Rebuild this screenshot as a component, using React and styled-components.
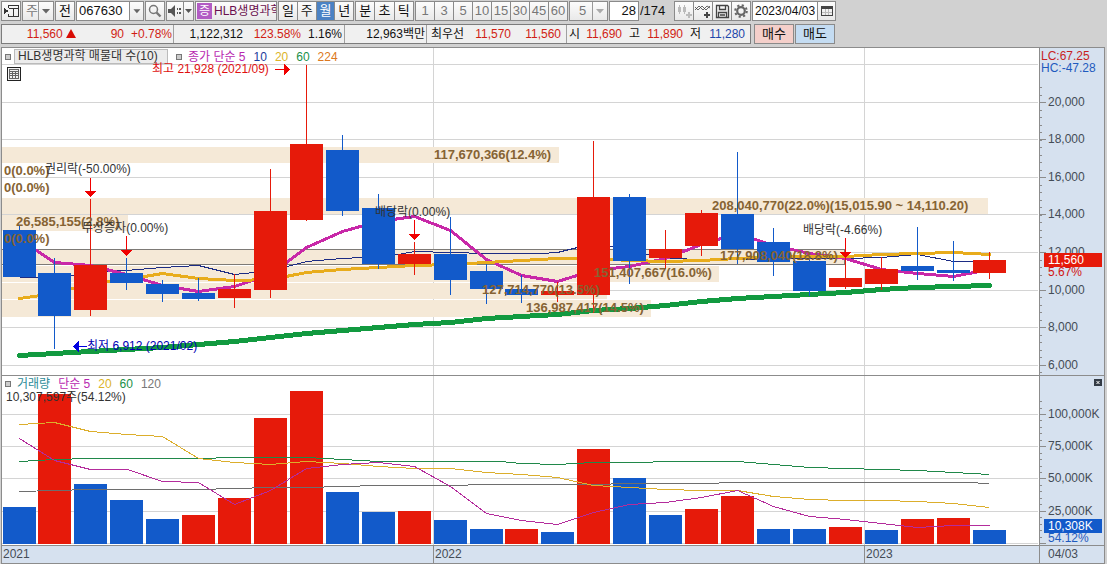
import { useState } from 'react';
import styled, { createGlobalStyle, css } from 'styled-components';

const RED = '#e61a0a';
const BLUE = '#125aca';
const MAGENTA = '#c828a8';
const GOLD = '#e8ac1c';
const GREEN = '#129a40';
const NAVY = '#1c2c84';

// Canvas units of the two plots
const PRICE_BOX = { left: 2, top: 48, width: 1037, height: 327 };
const VOLUME_BOX = { left: 2, top: 376, width: 1037, height: 169 };
const VOLUME_BASE = 544;
const BAR_WIDTH = 33;

// x, body top, body bottom, wick top, wick bottom, volume top, up?, volume up?
const months = [
    [3, 230, 277, 225, 277, 507, false, false],
    [38, 273, 316, 258, 349, 394, false, true],
    [74, 265, 310, 199, 316, 484, true, false],
    [110, 273, 283, 258, 290, 500, false, false],
    [146, 284, 294, 280, 302, 519, false, false],
    [182, 293, 299, 278, 301, 515, false, true],
    [218, 289, 298, 274, 308, 498, true, true],
    [254, 211, 290, 169, 298, 418, true, true],
    [290, 144, 220, 65, 221, 391, true, true],
    [326, 150, 211, 135, 216, 492, false, false],
    [362, 208, 264, 194, 269, 512, false, false],
    [398, 254, 264, 242, 275, 511, true, true],
    [434, 254, 280, 217, 295, 520, false, false],
    [470, 271, 289, 264, 304, 529, false, false],
    [505, 289, 295, 275, 303, 529, false, true],
    [541, 291, 295, 282, 302, 532, true, false],
    [577, 197, 295, 141, 313, 449, true, true],
    [613, 197, 261, 194, 284, 478, false, false],
    [649, 249, 258, 230, 269, 515, true, false],
    [685, 213, 246, 210, 256, 509, true, true],
    [721, 214, 249, 152, 264, 496, false, true],
    [757, 242, 262, 228, 276, 529, false, false],
    [793, 261, 291, 258, 296, 529, false, false],
    [829, 278, 287, 238, 289, 527, true, true],
    [865, 269, 284, 257, 290, 530, true, false],
    [901, 266, 271, 227, 280, 519, false, true],
    [937, 270, 273, 241, 281, 518, false, true],
    [973, 260, 273, 252, 279, 530, true, false],
];

// Volume profile bands
const bands = [
    { top: 147, height: 16, right: 559, text: '117,670,366(12.4%)', left: 434, at: 155 },
    { top: 198, height: 16, right: 988, text: '208,040,770(22.0%)(15,015.90 ~ 14,110.20)', left: 712, at: 206 },
    { top: 215, height: 16, right: 128, text: '26,585,155(2.8%)', left: 16, at: 222 },
    { top: 249, height: 16, right: 845, text: '177,908,040(18.8%)', left: 720, at: 256, outlined: true },
    { top: 266, height: 16, right: 719, text: '151,407,667(16.0%)', left: 594, at: 273 },
    { top: 283, height: 16, right: 607, text: '127,714,770(13.5%)', left: 482, at: 290 },
    { top: 300, height: 17, right: 651, text: '136,987,417(14.5%)', left: 526, at: 308 },
];

const emptyBands = [171, 188, 239];

const priceAverages = [
    {
        color: NAVY,
        width: 1,
        points: '19,277 54,277 72,275 90,272 126,270 162,267 198,265 234,274 254,272 287,266 306,261 342,258 362,257 398,254 414,251 450,252 486,253 540,253 557,252 577,247 593,246 612,246 629,248 647,254 665,258 682,258 701,260 737,259 773,258 809,258 845,258 881,257 917,254 953,261 989,261',
    },
    {
        color: MAGENTA,
        width: 3,
        points: '19,238 36,250 54,262 90,265 126,274 162,285 198,291 234,286 270,274 306,247 342,231 378,221 414,216 450,230 486,259 521,275 557,281 593,270 629,266 665,258 701,244 737,233 773,245 809,253 845,258 881,269 917,273 953,276 989,269',
    },
    {
        color: GOLD,
        width: 3,
        points: '19,298 54,293 72,288 107,281 126,279 162,273 198,278 234,280 270,279 306,272 342,269 378,267 414,265 450,264 486,262 521,260 557,258 593,258 629,260 665,261 701,260 737,258 773,256 809,256 845,256 881,254 917,253 953,252 989,254',
    },
    {
        color: GREEN,
        width: 5,
        points: '19,355 54,353 90,351 126,349 162,347 198,344 234,341 270,337 306,333 342,330 378,327 414,324 450,322 486,318 521,316 557,314 593,310 629,308 665,305 701,301 737,298 773,296 809,294 845,292 881,289 917,287 953,286 989,285',
    },
];

const volumeAverages = [
    { color: '#6e6e6e', points: '19,491 54,490 90,489 198,489 234,488 270,487 306,487 342,486 378,485 450,485 486,484 593,484 629,483 701,483 737,482 965,482 989,483' },
    { color: '#20884a', points: '19,461 54,459 90,458 198,458 234,457 306,457 342,459 378,461 414,461 500,461 521,463 557,464 593,462 640,462 665,461 737,461 773,464 809,467 845,468 881,469 917,470 953,472 989,474' },
    { color: '#dcae2c', points: '19,424 54,422 90,431 126,434 162,436 198,458 234,462 270,464 306,461 342,463 378,466 414,468 450,468 486,472 521,474 557,477 593,485 629,487 665,489 701,490 737,490 773,496 809,499 845,500 881,500 917,501 953,503 989,507' },
    { color: '#b42c9c', points: '19,438 54,460 90,469 127,469 162,481 198,482 234,504 270,490 306,468 342,464 378,462 414,466 450,486 486,513 521,520 557,524 593,512 629,504 665,502 701,497 737,490 773,506 809,516 845,519 881,523 917,527 953,525 989,525' },
];

const events = [
    { left: 45, at: 169, text: '권리락(-50.00%)', tip: [90, 178, 197] },
    { left: 82, at: 228, text: '무상증자(0.00%)', tip: [126, 236, 256] },
    { left: 375, at: 212, text: '배당락(0.00%)', tip: [414, 220, 240] },
    { left: 803, at: 230, text: '배당락(-4.66%)', tip: [845, 238, 258] },
];

const priceGrid = [64, 102, 139, 177, 214, 252, 290, 327, 365];
const priceLabels = ['20,000', '18,000', '16,000', '14,000', '12,000', '10,000', '8,000', '6,000'];
const volumeGrid = [414, 446, 478, 511, 543];
const volumeLabels = ['100,000K', '75,000K', '50,000K', '25,000K'];
const yearLines = [433, 864];

const GlobalStyle = createGlobalStyle`
    * {
        box-sizing: border-box;
    }

    body {
        margin: 0;
        background: #d1d1d1;
        font-family: 'Liberation Sans', 'Noto Sans CJK KR', sans-serif;
        font-size: 12px;
        line-height: 14px;
        color: #111;
    }

    button, input, select {
        font: inherit;
        color: inherit;
        margin: 0;
        padding: 0;
    }
`;

const Page = styled.main`
    display: flex;
    flex-direction: column;
    min-height: 100vh;
`;

const Header = styled.header`
    display: flex;
    flex-direction: column;
    gap: 3px;
    padding: 1px 1px 3px;
`;

const Bar = styled.div`
    display: flex;
    gap: 1px;
    height: 20px;
    white-space: nowrap;
`;

const raised = css`
    border: 1px solid #8a8a8a;
    background: linear-gradient(#fcfcfc, #e9e9e9);
`;

const ToolButton = styled.button`
    ${raised}
    display: flex;
    align-items: center;
    justify-content: center;
    flex: none;
    width: ${(p) => p.$width || 20}px;
    font-size: 13px;
    ${(p) => p.$tone && css`background: ${p.$tone};`}
`;

const Group = styled.div`
    ${raised}
    display: flex;
    flex: none;
    width: ${(p) => p.$width}px;
`;

const GroupButton = styled.button`
    display: flex;
    align-items: center;
    justify-content: center;
    flex: ${(p) => (p.$width ? 'none' : '1 1 0')};
    width: ${(p) => (p.$width ? `${p.$width}px` : 'auto')};
    border: 0;
    background: ${(p) => (p.$active ? '#4b82c4' : 'linear-gradient(#fcfcfc, #e9e9e9)')};
    color: ${(p) => (p.$active ? '#fff' : p.$muted ? '#777' : '#111')};
    font-size: 13px;

    & + &, input + & {
        border-left: 1px solid #8a8a8a;
    }
`;

const Field = styled.input`
    flex: 1 1 0;
    min-width: 0;
    border: 0;
    background: #fff;
    padding: 0 2px;
    font-size: ${(p) => (p.$small ? 12 : 13)}px;
    text-align: ${(p) => (p.$right ? 'right' : 'left')};
`;

const SelectWrap = styled.label`
    ${raised}
    position: relative;
    display: flex;
    flex: none;
    width: ${(p) => p.$width}px;

    select {
        width: 100%;
        border: 0;
        padding-left: ${(p) => p.$inset}px;
        appearance: none;
        background: transparent;
        color: #777;
        font-size: 13px;
    }

    svg {
        position: absolute;
        top: 0;
        right: 0;
        pointer-events: none;
    }
`;

const StockName = styled.div`
    ${raised}
    display: flex;
    align-items: center;
    gap: 2px;
    flex: none;
    width: 82px;
    overflow: hidden;
    padding-left: 1px;
    color: #6a0f4e;
`;

const StockBadge = styled.span`
    flex: none;
    width: 15px;
    height: 16px;
    background: #b25cc4;
    color: #fff;
    line-height: 16px;
    text-align: center;
`;

const PageCount = styled.span`
    width: 33px;
    font-size: 13px;
    line-height: 20px;
`;

const Quote = styled.div`
    display: flex;
    flex: none;
    width: 750px;
    margin-right: 2px;
    border: 1px solid #7c7c7c;
    background: #f0f0f0;
    line-height: 18px;
`;

const QuoteCell = styled.div`
    display: flex;
    flex: none;
    width: ${(p) => p.$width}px;
    border-right: 1px solid #a0a0a0;

    &:last-child {
        flex: 1;
        border-right: 0;
    }
`;

const Figure = styled.span`
    width: ${(p) => p.$width}px;
    text-align: right;
    color: ${(p) => p.$color || '#111'};
`;

const Frame = styled.section`
    flex: 1;
    display: grid;
    grid-template-columns: minmax(0, 1fr) 65px;
    grid-template-rows: minmax(0, 328fr) minmax(0, 169fr) 19px;
    min-height: 480px;
    margin: 0 2px 0 1px;
    border: 1px solid #8c8c8c;
    border-bottom: 0;
    background: #fff;
`;

const Panel = styled.div`
    position: relative;
    overflow: hidden;
    border-bottom: ${(p) => (p.$divided ? '1px solid #8c8c8c' : '0')};
`;

const Axis = styled(Panel)`
    border-left: 1px solid #8c8c8c;
    background: #d6e1ef;
    color: #444c56;
`;

const Drawing = styled.svg`
    position: absolute;
    inset: 0;
    width: 100%;
    height: 100%;
    shape-rendering: crispEdges;
`;

const Legend = styled.div`
    position: relative;
    display: flex;
    align-items: center;
    gap: 8px;
    padding: 1px 3px 0;
    white-space: nowrap;
`;

const LegendItem = styled.span`
    color: ${(p) => p.$color};
`;

const LegendHandle = styled.i`
    width: 6px;
    height: 6px;
    border: 1px solid #777;
    background: #ccc;
`;

const LegendTitle = styled.button`
    min-width: 154px;
    height: 15px;
    margin-left: -5px;
    padding: 0 3px;
    border: 1px solid #bbb;
    background: #ececec;
    color: #333;
    line-height: 13px;
    text-align: left;
`;

const SeriesTitle = styled(LegendItem)`
    margin-left: -2px;
`;

const VolumeReading = styled.p`
    position: relative;
    margin: 0;
    padding-left: 4px;
    line-height: 12px;
    color: #333;
`;

const GridButton = styled.button`
    position: relative;
    display: flex;
    align-items: center;
    justify-content: center;
    width: 14px;
    height: 14px;
    margin: 3px 5px;
    border: 1px solid #222;
    background: #f4f4f4;
`;

// Text pinned to a point of the plot
const Pin = styled.span`
    position: absolute;
    transform: translateY(-50%);
    color: ${(p) => p.$color || '#333'};
    white-space: nowrap;
`;

const BandPin = styled(Pin)`
    font-size: 13px;
    font-weight: bold;
    color: #866333;
`;

const AxisPin = styled(Pin)`
    left: ${(p) => (p.$wide ? 1 : 8)}px;
    color: ${(p) => p.$color || '#444c56'};
    line-height: 12px;
`;

const AxisTag = styled(Pin)`
    left: 4px;
    right: 2px;
    height: 14px;
    padding-left: 4px;
    background: ${(p) => p.$tone};
    color: #fff;
`;

const CloseButton = styled.button`
    position: absolute;
    top: 3px;
    right: 2px;
    display: flex;
    width: 8px;
    height: 7px;
    border: 0;
    background: #333b45;
`;

const Years = styled.div`
    display: grid;
    grid-template-columns: 431fr 431fr 175fr;
    border-top: 1px solid #8c8c8c;
    border-bottom: 1px solid #8c8c8c;
    background: #d6e1ef;
    color: #444c56;
    line-height: 16px;
`;

const Year = styled.span`
    padding-left: 1px;

    & + & {
        border-left: 1px solid #8c8c8c;
    }
`;

const LastDate = styled(Years)`
    display: block;
    padding-left: 8px;
    border-left: 1px solid #8c8c8c;
`;

const level = (box, at) => ({ top: `${((at - box.top) / box.height) * 100}%` });

const place = (box, left, at) => ({
    left: `${((left - box.left) / box.width) * 100}%`,
    ...level(box, at),
});

const viewBox = (box) => `${box.left} ${box.top} ${box.width} ${box.height}`;

function Caret({ color = '#666', line }) {
    return (
        <svg width="15" height="18" viewBox="0 0 15 18" aria-hidden="true">
            {line && <path d="M0.5 0v18" stroke="#999" />}
            <path d="M4 7h8l-4 4.500z" fill={color} />
        </svg>
    );
}

function Grid({ box, lines }) {
    return (
        <g fill="#d4d4d4">
            {lines.map((y) => (
                <rect key={y} x={box.left} y={y} width={box.width - 1} height="1" />
            ))}
            {yearLines.map((x) => (
                <rect key={x} x={x} y={box.top} width="1" height={box.height} />
            ))}
        </g>
    );
}

function Averages({ lines }) {
    return (
        <g transform="translate(0.5 0.5)" fill="none" strokeLinejoin="round">
            {lines.map((line) => (
                <polyline
                    key={line.color}
                    points={line.points}
                    stroke={line.color}
                    strokeWidth={line.width || 1}
                    strokeLinecap={line.width > 1 ? 'round' : 'butt'}
                />
            ))}
        </g>
    );
}

function PricePlot() {
    return (
        <Panel $divided>
            <Drawing viewBox={viewBox(PRICE_BOX)} preserveAspectRatio="none" role="img" aria-label="월봉 차트">
                <Grid box={PRICE_BOX} lines={priceGrid} />
                {bands.map((band) => (
                    <g key={band.top}>
                        <rect x="2" y={band.top} width={band.right - 2} height={band.height} fill="#f5e9d7" />
                        {band.outlined && (
                            <path d={`M2 ${band.top + 0.5}H${band.right - 0.5}v15H2`} fill="none" stroke="#7d7a76" />
                        )}
                    </g>
                ))}
                <Averages lines={priceAverages} />
                {months.map(([x, top, bottom, high, low, , up]) => (
                    <g key={x} fill={up ? RED : BLUE}>
                        <rect x={x + 16} y={high} width="1" height={low - high} />
                        <rect x={x} y={top} width={BAR_WIDTH} height={bottom - top} />
                    </g>
                ))}
                {events.map(({ tip: [x, from, to] }) => (
                    <g key={x} fill="#f00000">
                        <rect x={x} y={from} width="1" height={to - from - 5} />
                        <path d={`M${x - 5} ${to - 6}h11l-5.500 6z`} />
                    </g>
                ))}
                <path d="M275 69h9v-5l6 5.500l-6 5.500v-5h-9z" fill="#f00000" />
                <path d="M87 346h-8v-5l-6 5.500l6 5.500v-5h8z" fill="#0000e0" />
            </Drawing>
            <Legend>
                <LegendHandle />
                <LegendTitle>HLB생명과학 매물대 수(10)</LegendTitle>
                <LegendHandle />
                <SeriesTitle $color="#b828b0">종가 단순 5</SeriesTitle>
                <LegendItem $color="#1c3c9c">10</LegendItem>
                <LegendItem $color="#dcb428">20</LegendItem>
                <LegendItem $color="#209048">60</LegendItem>
                <LegendItem $color="#dc7820">224</LegendItem>
            </Legend>
            <GridButton aria-label="데이터 표">
                <svg width="10" height="10" viewBox="0 0 10 10" fill="#666" shapeRendering="crispEdges">
                    <path d="M0 0h10v10h-10zM1 1v1h8v-1zM1 3v1h2v-1zM4 3v1h2v-1zM7 3v1h2v-1zM1 5v1h2v-1zM4 5v1h2v-1zM7 5v1h2v-1zM1 7v2h2v-2zM4 7v2h2v-2zM7 7v2h2v-2z" fillRule="evenodd" />
                </svg>
            </GridButton>
            {bands.map((band) => (
                <BandPin key={band.text} style={place(PRICE_BOX, band.left, band.at)}>
                    {band.text}
                </BandPin>
            ))}
            {emptyBands.map((at) => (
                <BandPin key={at} style={place(PRICE_BOX, 4, at)}>0(0.0%)</BandPin>
            ))}
            {events.map((event) => (
                <Pin key={event.left} style={place(PRICE_BOX, event.left, event.at)}>{event.text}</Pin>
            ))}
            <Pin $color="#e01010" style={place(PRICE_BOX, 152, 69)}>최고 21,928 (2021/09)</Pin>
            <Pin $color="#0000b4" style={place(PRICE_BOX, 87, 346)}>최저 6,912 (2021/02)</Pin>
        </Panel>
    );
}

function Ticks({ box, major, step }) {
    const minor = [];
    for (let y = major[0] - step * 2; y < box.top + box.height; y += step) {
        minor.push(Math.round(y));
    }
    return (
        <Drawing viewBox={`0 ${box.top} 64 ${box.height}`} preserveAspectRatio="none" fill="#8c8c8c" aria-hidden="true">
            {minor.map((y) => <rect key={y} y={y} width="2" height="1" />)}
            {major.map((y) => <rect key={`major-${y}`} y={y} width="6" height="1" />)}
        </Drawing>
    );
}

function PriceAxis() {
    return (
        <Axis $divided>
            <Ticks box={PRICE_BOX} major={priceGrid.slice(1)} step={7.5} />
            <AxisPin $wide $color="#c81e1e" style={level(PRICE_BOX, 56)}>LC:67.25</AxisPin>
            <AxisPin $wide $color="#1e5abe" style={level(PRICE_BOX, 68)}>HC:-47.28</AxisPin>
            {priceLabels.map((text, i) => (
                <AxisPin key={text} style={level(PRICE_BOX, priceGrid[i + 1])}>{text}</AxisPin>
            ))}
            <AxisTag $tone={RED} style={level(PRICE_BOX, 260)}>11,560</AxisTag>
            <AxisPin $color="#d01414" style={level(PRICE_BOX, 272)}>5.67%</AxisPin>
        </Axis>
    );
}

function VolumePlot() {
    return (
        <Panel>
            <Drawing viewBox={viewBox(VOLUME_BOX)} preserveAspectRatio="none" role="img" aria-label="거래량 차트">
                <Grid box={VOLUME_BOX} lines={volumeGrid} />
                {months.map(([x, , , , , top, , up]) => (
                    <rect key={x} x={x} y={top} width={BAR_WIDTH} height={VOLUME_BASE - top} fill={up ? RED : BLUE} />
                ))}
                <Averages lines={volumeAverages} />
            </Drawing>
            <Legend>
                <LegendHandle />
                <SeriesTitle $color="#2c8c98">거래량</SeriesTitle>
                <LegendItem $color="#b828b0">단순 5</LegendItem>
                <LegendItem $color="#dcb428">20</LegendItem>
                <LegendItem $color="#209048">60</LegendItem>
                <LegendItem $color="#777">120</LegendItem>
            </Legend>
            <VolumeReading>10,307,597주(54.12%)</VolumeReading>
        </Panel>
    );
}

function VolumeAxis() {
    return (
        <Axis>
            <Ticks box={VOLUME_BOX} major={volumeGrid} step={6.45} />
            {volumeLabels.map((text, i) => (
                <AxisPin key={text} style={level(VOLUME_BOX, volumeGrid[i])}>{text}</AxisPin>
            ))}
            <AxisTag $tone={BLUE} style={level(VOLUME_BOX, 526)}>10,308K</AxisTag>
            <AxisPin $color="#1e5abe" style={level(VOLUME_BOX, 538)}>54.12%</AxisPin>
            <CloseButton aria-label="닫기">
                <svg width="8" height="7" viewBox="0 0 8 7" stroke="#fff">
                    <path d="M2.500 2l3 3M5.500 2l-3 3" />
                </svg>
            </CloseButton>
        </Axis>
    );
}

function Toolbar() {
    const [period, setPeriod] = useState('월');

    return (
        <Bar>
            <ToolButton aria-label="패널 열기">
                <svg width="15" height="14" viewBox="0 0 15 14" fill="none" stroke="#333" shapeRendering="crispEdges">
                    <path d="M4.500 4V1.500h10v11h-10V10M4.500 4.500h10M9.500 4.500v8" />
                    <path d="M0 4l5 3-5 3z" fill="#333" stroke="none" />
                </svg>
            </ToolButton>
            <SelectWrap $width={32} $inset={3}>
                <select aria-label="구분" defaultValue="주">
                    <option>주</option>
                </select>
                <Caret line />
            </SelectWrap>
            <ToolButton>전</ToolButton>
            <Group $width={68}>
                <Field aria-label="종목코드" defaultValue="067630" />
                <GroupButton aria-label="종목 목록" $width={14}><Caret /></GroupButton>
            </Group>
            <ToolButton aria-label="검색">
                <svg width="14" height="14" viewBox="0 0 14 14" fill="none" stroke="#777">
                    <circle cx="5.500" cy="5.500" r="4" strokeWidth="1.500" />
                    <path d="M8.500 8.500l4 4" strokeWidth="2.400" />
                </svg>
            </ToolButton>
            <Group $width={28}>
                <GroupButton aria-label="소리">
                    <svg width="14" height="12" viewBox="0 0 14 12" fill="#555">
                        <path d="M0 4h3l4-4v12L3 8H0zM9 3h1v2H9zM9 7h1v2H9zM11 3h2v2h-2zM11 7h2v2h-2z" />
                    </svg>
                </GroupButton>
                <GroupButton aria-label="소리 설정" $width={10}>
                    <svg width="7" height="4" viewBox="0 0 7 4"><path d="M0 0h7L3.500 4z" fill="#555" /></svg>
                </GroupButton>
            </Group>
            <StockName><StockBadge>증</StockBadge>HLB생명과학</StockName>
            <Group $width={76}>
                {['일', '주', '월', '년'].map((name) => (
                    <GroupButton key={name} $active={name === period} onClick={() => setPeriod(name)}>{name}</GroupButton>
                ))}
            </Group>
            <Group $width={59}>
                {['분', '초', '틱'].map((name) => (
                    <GroupButton key={name} $active={name === period} onClick={() => setPeriod(name)}>{name}</GroupButton>
                ))}
            </Group>
            <Group $width={153}>
                {[1, 3, 5, 10, 15, 30, 45, 60].map((n) => <GroupButton key={n} $muted>{n}</GroupButton>)}
            </Group>
            <SelectWrap $width={39} $inset={9}>
                <select aria-label="간격" defaultValue="5">
                    <option>5</option>
                </select>
                <Caret line color="#aaa" />
            </SelectWrap>
            <Group $width={30}>
                <Field aria-label="표시 개수" defaultValue="28" $right />
            </Group>
            <PageCount>/174</PageCount>
            <Group $width={77}>
                <GroupButton aria-label="봉 추가">
                    <svg width="15" height="15" viewBox="0 0 15 15" fill="#bbb">
                        <path d="M2 1h1v2h1v5H3v2H2V8H1V3h1zM7 1h1v2h1v5H8v2H7V8H6V3h1zM11 8h2v2h2v2h-2v2h-2v-2H9v-2h2z" />
                    </svg>
                </GroupButton>
                <GroupButton aria-label="지표 추가">
                    <svg width="16" height="15" viewBox="0 0 16 15" fill="none" stroke="#444">
                        <path d="M0 6l4-4 4 4 4-4 3 2M0 3l3 3 4-4 4 4 4-4" strokeWidth="0.800" />
                        <path d="M12 8v6M9 11h6" strokeWidth="2" />
                    </svg>
                </GroupButton>
                <GroupButton aria-label="저장">
                    <svg width="15" height="15" viewBox="0 0 15 15" fill="none" stroke="#444">
                        <path d="M1.500 1.500h11l1 1v11h-12zM4.500 1.500v4h6v-4M3.500 13.500v-5h8v5M5 11h5" strokeWidth="1.300" />
                    </svg>
                </GroupButton>
                <GroupButton aria-label="설정">
                    <svg width="14" height="14" viewBox="0 0 14 14" fill="none" stroke="#666">
                        <circle cx="7" cy="7" r="3.800" strokeWidth="2.200" />
                        <circle cx="7" cy="7" r="5.800" strokeWidth="2" strokeDasharray="2.200 2.355" />
                    </svg>
                </GroupButton>
            </Group>
            <Group $width={84}>
                <Field aria-label="기준일" defaultValue="2023/04/03" $small />
                <GroupButton aria-label="달력" $width={18}>
                    <svg width="12" height="12" viewBox="0 0 12 12" fill="none" stroke="#444" shapeRendering="crispEdges">
                        <path d="M0 1h12v3H0z" fill="#444" stroke="none" />
                        <path d="M0.500 4v6.500h11V4" />
                        <path d="M4.500 4v6M7.500 4v6M1 7.500h10" stroke="#bbb" />
                    </svg>
                </GroupButton>
            </Group>
        </Bar>
    );
}

function QuoteBar() {
    return (
        <Bar>
            <Quote>
                <QuoteCell $width={172}>
                    <Figure $width={74} $color="#d01e14">11,560 <svg width="10" height="9" viewBox="0 0 10 9"><path d="M5 0l5 9H0z" fill="#d80c04" /></svg></Figure>
                    <Figure $width={48} $color="#d01e14">90</Figure>
                    <Figure $width={48} $color="#d01e14">+0.78%</Figure>
                </QuoteCell>
                <QuoteCell $width={171}>
                    <Figure $width={69}>1,122,312</Figure>
                    <Figure $width={58} $color="#d01e14">123.58%</Figure>
                    <Figure $width={41}>1.16%</Figure>
                </QuoteCell>
                <QuoteCell $width={82}>
                    <Figure $width={80}>12,963백만</Figure>
                </QuoteCell>
                <QuoteCell $width={140}>
                    <Figure $width={37}>최우선</Figure>
                    <Figure $width={47} $color="#d01e14">11,570</Figure>
                    <Figure $width={50} $color="#d01e14">11,560</Figure>
                </QuoteCell>
                <QuoteCell>
                    <Figure $width={13}>시</Figure>
                    <Figure $width={42} $color="#d01e14">11,690</Figure>
                    <Figure $width={18}>고</Figure>
                    <Figure $width={43} $color="#d01e14">11,890</Figure>
                    <Figure $width={18}>저</Figure>
                    <Figure $width={44} $color="#1e46aa">11,280</Figure>
                </QuoteCell>
            </Quote>
            <ToolButton $width={40} $tone="#f4cfca">매수</ToolButton>
            <ToolButton $width={40} $tone="#c4dcf2">매도</ToolButton>
        </Bar>
    );
}

export default function App() {
    return (
        <Page>
            <GlobalStyle />
            <Header>
                <Toolbar />
                <QuoteBar />
            </Header>
            <Frame>
                <PricePlot />
                <PriceAxis />
                <VolumePlot />
                <VolumeAxis />
                <Years>
                    <Year>2021</Year>
                    <Year>2022</Year>
                    <Year>2023</Year>
                </Years>
                <LastDate>04/03</LastDate>
            </Frame>
        </Page>
    );
}
